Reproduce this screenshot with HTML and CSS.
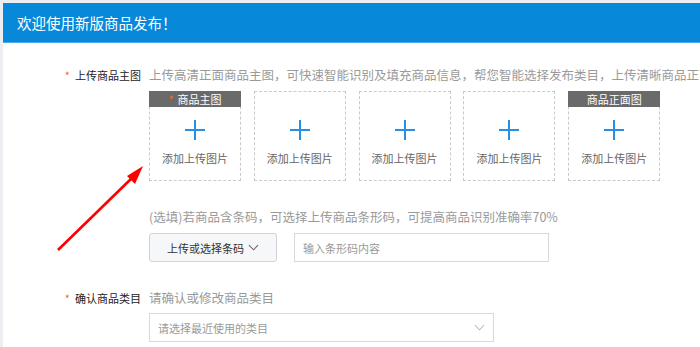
FILE: index.html
```html
<!DOCTYPE html>
<html lang="zh-CN">
<head>
  <meta charset="UTF-8">
  <meta name="viewport" content="width=device-width, initial-scale=1.0">
  <title>商品发布</title>
  <link rel="stylesheet" href="styles.css">
</head>
<body>
  <div class="page">
    <div class="panel">
      <div class="panel-head">欢迎使用新版商品发布！</div>
      <div class="form">
        <div class="form-row">
          <div class="form-label"><i class="req">*</i>上传商品主图</div>
          <div class="form-field">
            <div class="hint">上传高清正面商品主图，可快速智能识别及填充商品信息，帮您智能选择发布类目，上传清晰商品正面图可提高识别准确率</div>
            <div class="uploads">
              <div class="upload">
                <span class="upload-tag"><i class="req">*</i>商品主图</span>
                <svg class="upload-plus" viewBox="0 0 20 20"><path d="M10 0v20M0 10h20"/></svg>
                <span class="upload-text">添加上传图片</span>
              </div>
              <div class="upload">
                <svg class="upload-plus" viewBox="0 0 20 20"><path d="M10 0v20M0 10h20"/></svg>
                <span class="upload-text">添加上传图片</span>
              </div>
              <div class="upload">
                <svg class="upload-plus" viewBox="0 0 20 20"><path d="M10 0v20M0 10h20"/></svg>
                <span class="upload-text">添加上传图片</span>
              </div>
              <div class="upload">
                <svg class="upload-plus" viewBox="0 0 20 20"><path d="M10 0v20M0 10h20"/></svg>
                <span class="upload-text">添加上传图片</span>
              </div>
              <div class="upload">
                <span class="upload-tag">商品正面图</span>
                <svg class="upload-plus" viewBox="0 0 20 20"><path d="M10 0v20M0 10h20"/></svg>
                <span class="upload-text">添加上传图片</span>
              </div>
            </div>
          </div>
        </div>
        <div class="form-row">
          <div class="form-label"></div>
          <div class="form-field">
            <div class="hint">(选填)若商品含条码，可选择上传商品条形码，可提高商品识别准确率70%</div>
            <div class="barcode">
              <button class="barcode-btn">上传或选择条码
                <svg class="chevron" viewBox="0 0 12 7"><path d="M1 1l5 5 5-5"/></svg>
              </button>
              <input class="barcode-input" type="text" placeholder="输入条形码内容">
            </div>
          </div>
        </div>
        <div class="form-row">
          <div class="form-label"><i class="req">*</i>确认商品类目</div>
          <div class="form-field">
            <div class="hint hint-tight">请确认或修改商品类目</div>
            <div class="select">
              <span class="select-placeholder">请选择最近使用的类目</span>
              <svg class="chevron chevron-light" viewBox="0 0 12 7"><path d="M1 1l5 5 5-5"/></svg>
            </div>
          </div>
        </div>
      </div>
      <!-- annotation arrow pointing at the first upload box -->
      <svg class="arrow" viewBox="0 0 100 100" width="100" height="100">
        <path d="M3 97 L79 23" stroke="#ff0000" stroke-width="2.6" fill="none"/>
        <polygon points="88,13 72,23 80,31" fill="#ff0000"/>
      </svg>
    </div>
  </div>
</body>
</html>
```

FILE: styles.css
```css
:root {
  --blue: #0788d9;
  --req: #ff6a1a;
  --hint: #9a9a9a;
  --border: #d6d9de;
}
html, body {
  margin: 0;
  padding: 0;
  background: #eceef1;
  font-family: 'Noto Sans CJK SC', 'Noto Sans', sans-serif;
  color: #333;
}
.page {
  padding: 3px 0 0 3px;
  height: 344px;
  overflow: hidden;
}
.panel {
  position: relative;
  background: #fff;
  height: 100%;
  overflow: hidden;
}
.panel-head {
  height: 39px;
  line-height: 39px;
  padding-left: 14px;
  background: var(--blue);
  border-bottom: 1px solid #49a8ea;
  color: #fff;
  font-size: 14.5px;
}
.form {
  display: flex;
  flex-direction: column;
  gap: 27px;
  padding-top: 23px;
}
.form-row {
  display: grid;
  grid-template-columns: 138px 1fr;
  column-gap: 8px;
}
.form-label {
  text-align: right;
  font-size: 11px;
  line-height: 18px;
  color: #222;
}
.req {
  font-style: normal;
  color: var(--req);
  margin-right: 5px;
}
.form-field {
  min-width: 0;
}
.hint {
  font-size: 12.5px;
  line-height: 18px;
  color: var(--hint);
  white-space: nowrap;
  margin-bottom: 7px;
}
.hint-tight {
  margin-bottom: 6px;
}
.uploads {
  display: flex;
  gap: 12.8px;
}
.upload {
  position: relative;
  box-sizing: border-box;
  width: 92px;
  height: 90px;
  border: 1px dashed #c9c9c9;
  display: flex;
  flex-direction: column;
  align-items: center;
  padding-top: 28px;
}
.upload-tag {
  position: absolute;
  top: -1px;
  left: -1px;
  right: -1px;
  height: 16px;
  line-height: 16px;
  background: #6a6a6a;
  color: #fff;
  font-size: 11px;
  text-align: center;
}
.upload-tag .req {
  margin-right: 4px;
}
.upload-plus {
  width: 20px;
  height: 20px;
  stroke: #2a8fe2;
  stroke-width: 2;
  fill: none;
}
.upload-text {
  margin-top: 10px;
  font-size: 11px;
  line-height: 16px;
  color: #666;
}
.barcode {
  display: flex;
  gap: 17px;
}
.barcode-btn {
  box-sizing: border-box;
  width: 128px;
  height: 29px;
  border: 1px solid #d0d3d8;
  border-radius: 3px;
  background: #f6f7f9;
  font-family: inherit;
  font-size: 11px;
  color: #333;
  display: flex;
  align-items: center;
  justify-content: center;
  gap: 4px;
  padding: 0;
}
.chevron {
  width: 11px;
  height: 7px;
  stroke: #666;
  stroke-width: 1.1;
  fill: none;
}
.chevron-light {
  stroke: #bbb;
}
.barcode-input {
  box-sizing: border-box;
  width: 255px;
  height: 29px;
  border: 1px solid var(--border);
  border-radius: 0;
  padding: 0 8px;
  font-family: inherit;
  font-size: 11px;
  outline: none;
}
.barcode-input::placeholder {
  color: var(--hint);
}
.select {
  box-sizing: border-box;
  width: 345px;
  height: 29px;
  border: 1px solid var(--border);
  display: flex;
  align-items: center;
  justify-content: space-between;
  padding: 0 8px;
}
.select-placeholder {
  font-size: 11px;
  color: var(--hint);
}
.arrow {
  position: absolute;
  left: 52px;
  top: 150px;
  overflow: visible;
}
```
